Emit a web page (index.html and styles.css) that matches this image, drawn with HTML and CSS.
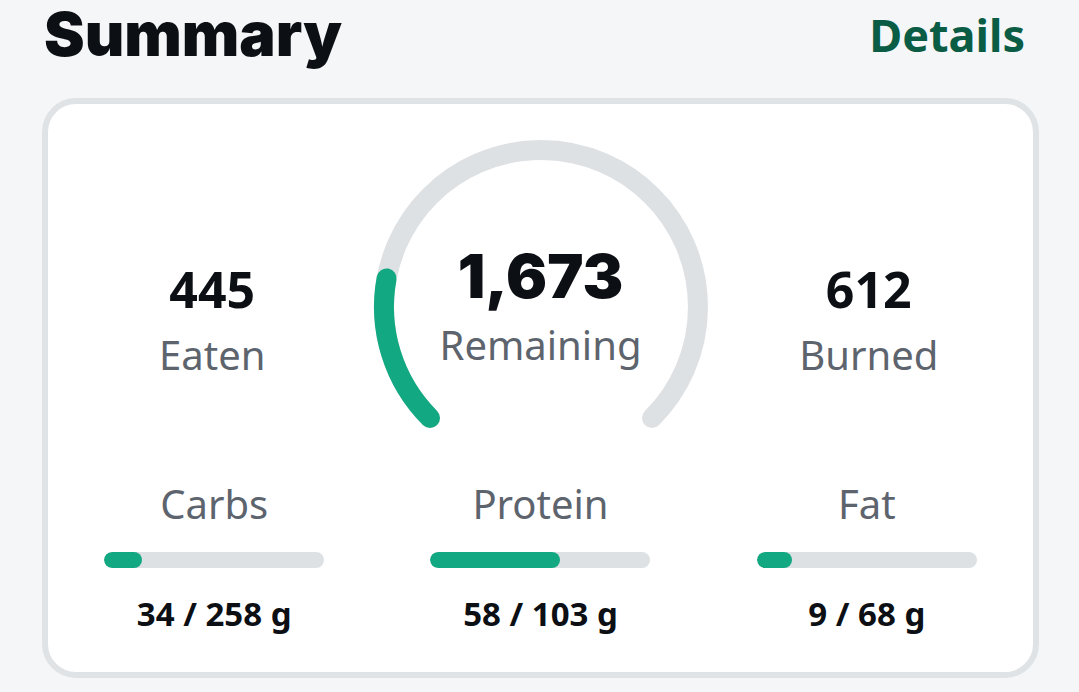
FILE: index.html
```html
<!DOCTYPE html>
<html>
<head>
<meta charset="utf-8">
<link rel="stylesheet" href="styles.css">
</head>
<body>
<div class="header">
  <h1 class="title">Summary</h1>
  <a class="details">Details</a>
</div>
<div class="card">
  <div class="top">
    <div class="stat">
      <div class="stat-num">445</div>
      <div class="stat-label">Eaten</div>
    </div>
    <div class="gauge">
      <svg class="gauge-svg" width="328" height="300" viewBox="0 0 328 300">
        <path d="M 53 288 A 157 157 0 1 1 275 288" fill="none" stroke="#dde1e4" stroke-width="20" stroke-linecap="round"/>
        <path d="M 53 288 A 157 157 0 0 1 9.6 148.4" fill="none" stroke="#12a982" stroke-width="20" stroke-linecap="round"/>
      </svg>
      <div class="gauge-text">
        <div class="gauge-num">1,673</div>
        <div class="stat-label">Remaining</div>
      </div>
    </div>
    <div class="stat">
      <div class="stat-num">612</div>
      <div class="stat-label">Burned</div>
    </div>
  </div>
  <div class="macros">
    <div class="macro">
      <div class="stat-label">Carbs</div>
      <div class="bar"><div class="fill" style="width:17%"></div></div>
      <div class="macro-val">34 / 258 g</div>
    </div>
    <div class="macro">
      <div class="stat-label">Protein</div>
      <div class="bar"><div class="fill" style="width:59%"></div></div>
      <div class="macro-val">58 / 103 g</div>
    </div>
    <div class="macro">
      <div class="stat-label">Fat</div>
      <div class="bar"><div class="fill" style="width:16%"></div></div>
      <div class="macro-val">9 / 68 g</div>
    </div>
  </div>
</div>
</body>
</html>
```
FILE: styles.css
```css
* { box-sizing: border-box; }
html, body { margin: 0; padding: 0; }
body {
  background: #f5f6f8;
  font-family: "Noto Sans", "Open Sans", sans-serif;
  width: 1079px;
  height: 692px;
  overflow: hidden;
}
.header {
  height: 98px;
  display: flex;
  justify-content: space-between;
  align-items: flex-start;
  padding: 0 54px 0 44px;
}
.title {
  margin: 0;
  font-family: "Inter", sans-serif;
  font-weight: 900;
  font-size: 61px;
  line-height: 68px;
  color: #0c0f14;
}
.details {
  margin-top: 12px;
  font-weight: 700;
  font-size: 45px;
  line-height: 46px;
  color: #0b5c45;
}
.card {
  margin: 0 40px 0 42px;
  height: 580px;
  background: #fff;
  border: 6px solid #dfe3e5;
  border-radius: 34px;
  display: flex;
  flex-direction: column;
}
.top {
  display: grid;
  grid-template-columns: 1fr 328px 1fr;
  padding-top: 26px;
  height: 326px;
}
.stat {
  display: flex;
  flex-direction: column;
  align-items: center;
  padding-top: 131px;
}
.stat-num {
  font-weight: 700;
  font-size: 50px;
  line-height: 56px;
  color: #0c0f14;
}
.stat-label {
  margin-top: 14px;
  font-size: 40px;
  line-height: 48px;
  color: #5d646d;
}
.gauge {
  display: grid;
}
.gauge-svg {
  grid-area: 1 / 1;
  overflow: visible;
}
.gauge-text {
  grid-area: 1 / 1;
  display: flex;
  flex-direction: column;
  align-items: center;
  padding-top: 114px;
}
.gauge-num {
  font-family: "Inter", sans-serif;
  font-weight: 900;
  font-size: 61px;
  line-height: 64px;
  color: #0c0f14;
}
.gauge-text .stat-label { margin-top: 13px; }
.macros {
  display: grid;
  grid-template-columns: repeat(3, 1fr);
  padding: 0 3px;
  margin-top: 50px;
}
.macro {
  display: flex;
  flex-direction: column;
  align-items: center;
}
.macro .stat-label { margin-top: 0; }
.bar {
  margin-top: 24px;
  width: 220px;
  height: 16px;
  border-radius: 8px;
  background: #dde1e4;
  overflow: hidden;
}
.fill {
  height: 100%;
  border-radius: 8px;
  background: #12a982;
}
.macro-val {
  margin-top: 26px;
  font-weight: 700;
  font-size: 33px;
  line-height: 40px;
  color: #0c0f14;
}
```
